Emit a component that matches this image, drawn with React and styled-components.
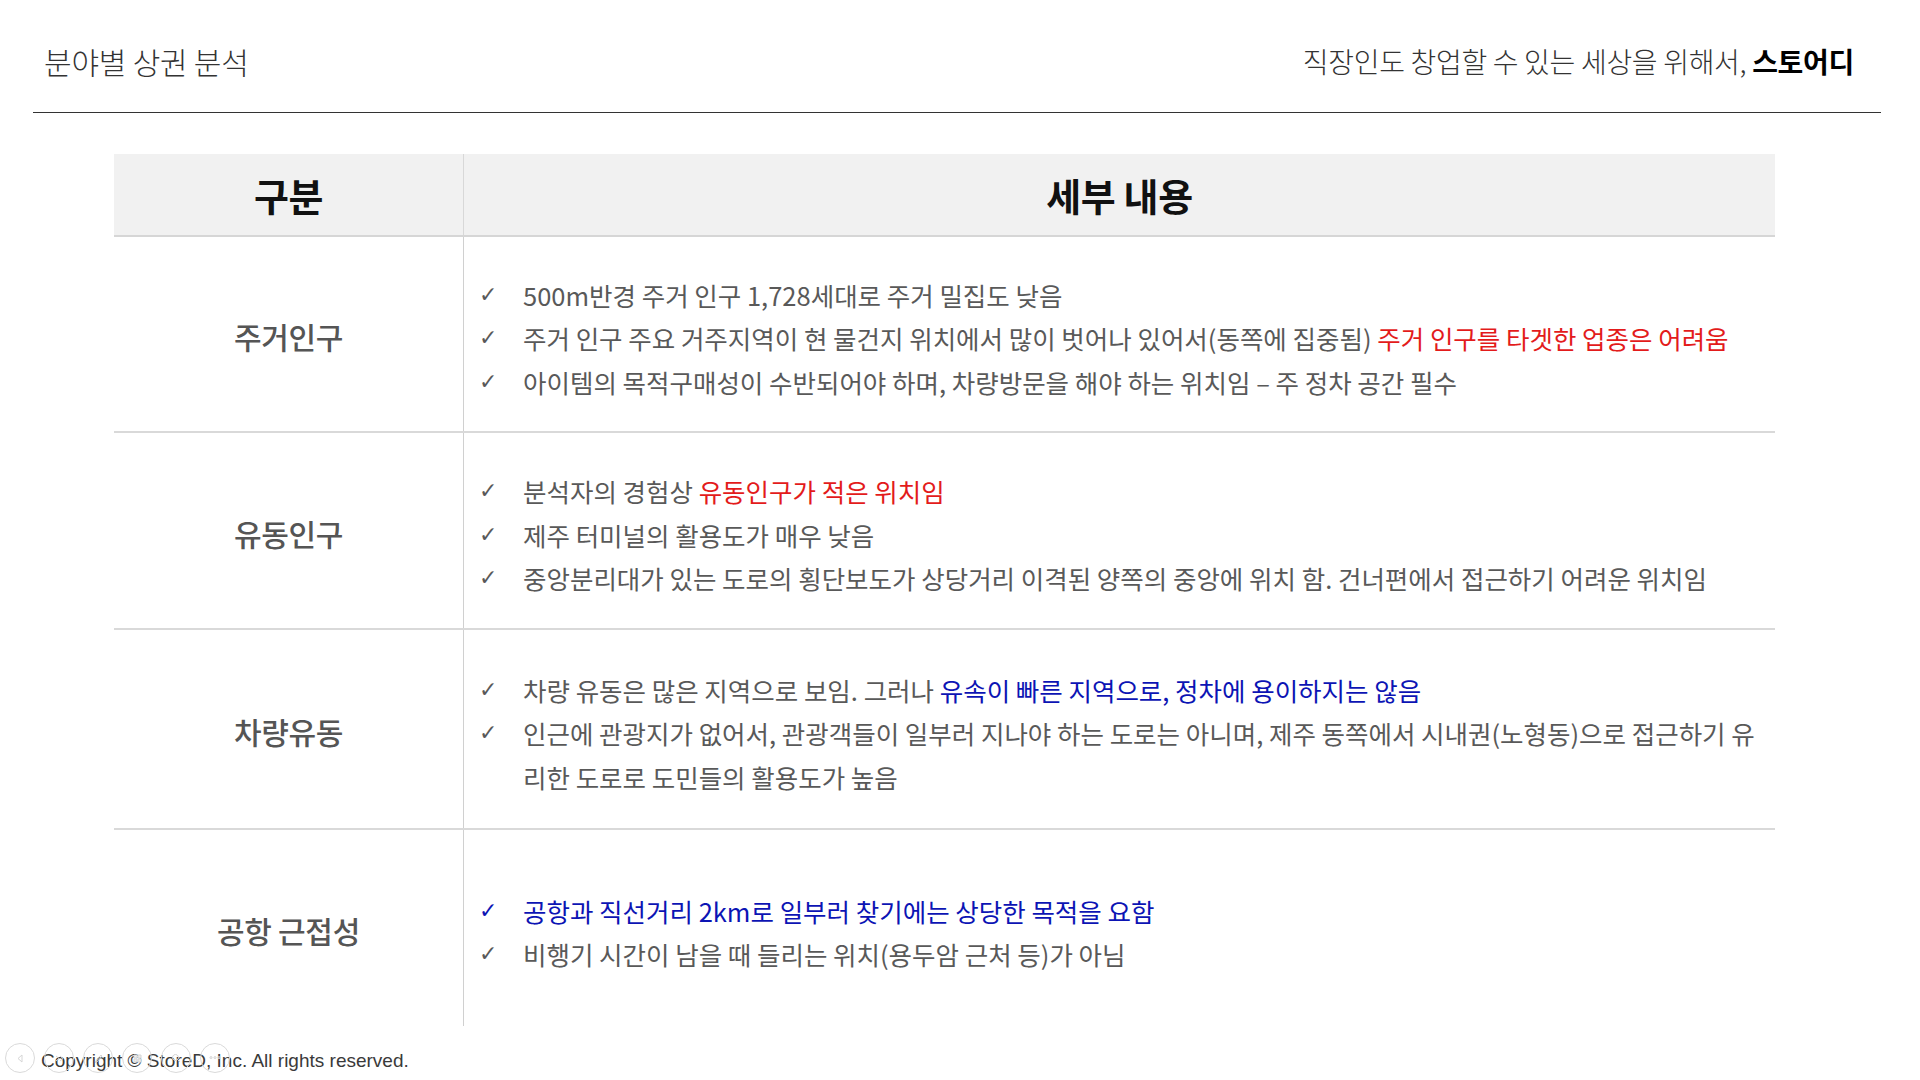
import React from "react";
import styled, { createGlobalStyle } from "styled-components";

const GlobalStyle = createGlobalStyle`
  html, body {
    margin: 0;
    padding: 0;
    background: #ffffff;
  }
  body {
    font-family: "Noto Sans CJK KR", "Noto Sans", sans-serif;
    color: #555;
  }
`;

const Page = styled.div`
  position: relative;
  width: 1920px;
  height: 1080px;
  overflow: hidden;
  display: flex;
  flex-direction: column;
`;

const Header = styled.header`
  height: 113px;
  margin: 0 39px 0 33px;
  padding: 10px 27px 0 11px;
  box-sizing: border-box;
  border-bottom: 1px solid #333;
  display: flex;
  align-items: center;
  justify-content: space-between;
`;

const Title = styled.h1`
  margin: 0;
  font-size: 30px;
  font-weight: 300;
  color: #333;
  letter-spacing: -0.2px;
`;

const Tagline = styled.div`
  font-size: 28px;
  font-weight: 300;
  color: #333;
  letter-spacing: -0.3px;

  b {
    font-weight: 700;
    color: #000;
  }
`;

const Table = styled.div`
  width: 1661px;
  margin: 41px 0 0 114px;
  display: flex;
  flex-direction: column;
`;

const HeadRow = styled.div`
  display: grid;
  grid-template-columns: 350px 1fr;
  height: 83px;
  box-sizing: border-box;
  background: #f1f1f1;
  border-bottom: 2px solid #d6d6d6;
`;

const HeadCell = styled.div`
  display: flex;
  align-items: center;
  justify-content: center;
  font-size: 38px;
  font-weight: 700;
  color: #111;
  letter-spacing: -0.4px;
  border-right: ${(p) => (p.$divider ? "1px solid #d8d8d8" : "none")};
`;

const Row = styled.div`
  display: grid;
  grid-template-columns: 350px 1fr;
  height: ${(p) => p.$height}px;
  box-sizing: border-box;
  border-bottom: ${(p) => (p.$last ? "none" : "2px solid #d9d9d9")};
`;

const Label = styled.div`
  display: flex;
  align-items: center;
  justify-content: center;
  padding-top: 4px;
  font-size: 30px;
  font-weight: 500;
  color: #555;
  letter-spacing: -0.3px;
  border-right: 1px solid #d0d0d0;
`;

const Details = styled.ul`
  list-style: none;
  margin: 0;
  padding: 8px 0 0 15px;
  display: flex;
  flex-direction: column;
  justify-content: center;
`;

const Item = styled.li`
  display: flex;
  align-items: flex-start;
  font-size: 25.5px;
  line-height: 43.5px;
  color: ${(p) => (p.$tone === "blue" ? "#0c14b4" : "#595959")};
  letter-spacing: 0;
`;

const Check = styled.span`
  flex: 0 0 44px;
  font-family: "DejaVu Sans", sans-serif;
  font-size: 22px;
  color: inherit;
`;

const Red = styled.span`
  color: #e31b1b;
`;

const Blue = styled.span`
  color: #0c14b4;
`;

const Footer = styled.footer`
  margin: 24px 0 0 41px;
  font-family: "Liberation Sans", Arial, sans-serif;
  font-size: 19px;
  color: #3a3a3a;
`;

const Controls = styled.div`
  position: absolute;
  left: 5px;
  top: 1043px;
  display: flex;
  gap: 9px;
  pointer-events: none;
`;

const Control = styled.div`
  width: 28px;
  height: 28px;
  border-radius: 50%;
  border: 1px solid #dadada;
  display: flex;
  align-items: center;
  justify-content: center;
`;

const icons = [
  <path key="a" d="M9 4 L5 7.5 L9 11 Z" fill="none" />,
  <path key="b" d="M4 5 L7 7.5 L4 10 M8 5 L11 7.5 L8 10" fill="none" />,
  <path key="c" d="M4 11 L10 4 L11 5 L5 12 Z" fill="none" />,
  <path key="d" d="M4 4 H7 V7 H4 Z M8 4 H11 V7 H8 Z M4 8 H7 V11 H4 Z M8 8 H11 V11 H8 Z" fill="#eee" />,
  <path key="e" d="M6.5 3.5 A3 3 0 1 1 6.49 3.5 M8.7 8.7 L11 11" fill="none" />,
  <path key="f" d="M3 7.5 A1 1 0 1 1 3.01 7.5 M7 7.5 A1 1 0 1 1 7.01 7.5 M11 7.5 A1 1 0 1 1 11.01 7.5" fill="none" />,
];

const rows = [
  {
    label: "주거인구",
    height: 196,
    items: [
      { text: "500m반경 주거 인구 1,728세대로 주거 밀집도 낮음" },
      {
        text: "주거 인구 주요 거주지역이 현 물건지 위치에서 많이 벗어나 있어서(동쪽에 집중됨) ",
        red: "주거 인구를 타겟한 업종은 어려움",
      },
      { text: "아이템의 목적구매성이 수반되어야 하며, 차량방문을 해야 하는 위치임 – 주 정차 공간 필수" },
    ],
  },
  {
    label: "유동인구",
    height: 197,
    items: [
      { text: "분석자의 경험상 ", red: "유동인구가 적은 위치임" },
      { text: "제주 터미널의 활용도가 매우 낮음" },
      { text: "중앙분리대가 있는 도로의 횡단보도가 상당거리 이격된 양쪽의 중앙에 위치 함. 건너편에서 접근하기 어려운 위치임" },
    ],
  },
  {
    label: "차량유동",
    height: 200,
    items: [
      { text: "차량 유동은 많은 지역으로 보임. 그러나 ", blue: "유속이 빠른 지역으로, 정차에 용이하지는 않음" },
      {
        text: "인근에 관광지가 없어서, 관광객들이 일부러 지나야 하는 도로는 아니며, 제주 동쪽에서 시내권(노형동)으로 접근하기 유",
        wrap: "리한 도로로 도민들의 활용도가 높음",
      },
    ],
  },
  {
    label: "공항 근접성",
    height: 196,
    items: [
      { tone: "blue", lead: "공항과 직선거리 2km로 일부러 찾기에는 상당한 목적", text: "을 요함" },
      { text: "비행기 시간이 남을 때 들리는 위치(용두암 근처 등)가 아님" },
    ],
  },
];

export default function App() {
  return (
    <Page>
      <GlobalStyle />
      <Header>
        <Title>분야별 상권 분석</Title>
        <Tagline>
          직장인도 창업할 수 있는 세상을 위해서, <b>스토어디</b>
        </Tagline>
      </Header>

      <Table>
        <HeadRow>
          <HeadCell $divider>구분</HeadCell>
          <HeadCell>세부 내용</HeadCell>
        </HeadRow>
        {rows.map((row, i) => (
          <Row key={row.label} $height={row.height} $last={i === rows.length - 1}>
            <Label>{row.label}</Label>
            <Details>
              {row.items.map((item, j) => (
                <Item key={j} $tone={item.tone}>
                  <Check>✓</Check>
                  <span>
                    {item.lead && <Blue>{item.lead}</Blue>}
                    {item.text}
                    {item.red && <Red>{item.red}</Red>}
                    {item.blue && <Blue>{item.blue}</Blue>}
                    {item.wrap && (
                      <>
                        <br />
                        {item.wrap}
                      </>
                    )}
                  </span>
                </Item>
              ))}
            </Details>
          </Row>
        ))}
      </Table>

      <Footer>Copyright © StoreD, Inc. All rights reserved.</Footer>

      <Controls>
        {icons.map((icon, i) => (
          <Control key={i}>
            <svg width="15" height="15" viewBox="0 0 15 15" stroke="#d6d6d6" strokeWidth="1">
              {icon}
            </svg>
          </Control>
        ))}
      </Controls>
    </Page>
  );
}
